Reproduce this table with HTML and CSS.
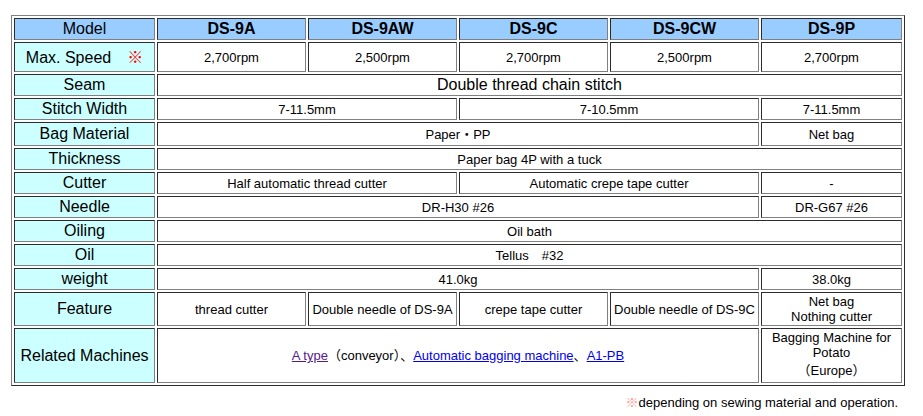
FILE: index.html
```html
<!DOCTYPE html>
<html>
<head>
<meta charset="utf-8">
<link rel="stylesheet" href="styles.css">
</head>
<body>
<div class="wrap">
<table class="spec">
  <tr class="r-head">
    <th class="lbl">Model</th>
    <th class="m">DS-9A</th>
    <th class="m">DS-9AW</th>
    <th class="m">DS-9C</th>
    <th class="m">DS-9CW</th>
    <th class="m last">DS-9P</th>
  </tr>
  <tr class="r-speed">
    <td class="lbl">Max. Speed　<span class="mark">※</span></td>
    <td>2,700rpm</td>
    <td>2,500rpm</td>
    <td>2,700rpm</td>
    <td>2,500rpm</td>
    <td>2,700rpm</td>
  </tr>
  <tr>
    <td class="lbl">Seam</td>
    <td colspan="5" class="big">Double thread chain stitch</td>
  </tr>
  <tr>
    <td class="lbl">Stitch Width</td>
    <td colspan="2">7-11.5mm</td>
    <td colspan="2">7-10.5mm</td>
    <td>7-11.5mm</td>
  </tr>
  <tr class="r-bag">
    <td class="lbl">Bag Material</td>
    <td colspan="4">Paper・PP</td>
    <td>Net bag</td>
  </tr>
  <tr>
    <td class="lbl">Thickness</td>
    <td colspan="5">Paper bag 4P with a tuck</td>
  </tr>
  <tr>
    <td class="lbl">Cutter</td>
    <td colspan="2">Half automatic thread cutter</td>
    <td colspan="2">Automatic crepe tape cutter</td>
    <td>-</td>
  </tr>
  <tr>
    <td class="lbl">Needle</td>
    <td colspan="4">DR-H30 #26</td>
    <td>DR-G67 #26</td>
  </tr>
  <tr>
    <td class="lbl">Oiling</td>
    <td colspan="5">Oil bath</td>
  </tr>
  <tr>
    <td class="lbl">Oil</td>
    <td colspan="5">Tellus　#32</td>
  </tr>
  <tr>
    <td class="lbl">weight</td>
    <td colspan="4">41.0kg</td>
    <td>38.0kg</td>
  </tr>
  <tr>
    <td class="lbl">Feature</td>
    <td>thread cutter</td>
    <td>Double needle of DS-9A</td>
    <td>crepe tape cutter</td>
    <td>Double needle of DS-9C</td>
    <td>Net bag<br>Nothing cutter</td>
  </tr>
  <tr class="r-rel">
    <td class="lbl">Related Machines</td>
    <td colspan="4"><a href="#" class="visited">A type</a>（conveyor）、<a href="#">Automatic bagging machine</a>、<a href="#">A1-PB</a></td>
    <td>Bagging Machine for Potato<br><span class="eu">（Europe）</span></td>
  </tr>
</table>
<p class="note"><span class="note-mark">※</span>depending on sewing material and operation.</p>
</div>
</body>
</html>
```

FILE: styles.css
```css
html, body {
  margin: 0;
  padding: 0;
  background: #fff;
}
body {
  padding: 15px 0 0 11px;
  font-family: "Liberation Sans", Arial, "Noto Sans CJK JP", sans-serif;
  color: #000;
}
.wrap {
  width: 894px;
}
.spec {
  width: 894px;
  table-layout: fixed;
  border-collapse: separate;
  border-spacing: 2px;
  border: 1px outset gray;
}
.spec th,
.spec td {
  box-sizing: border-box;
  border: 1px inset gray;
  padding: 1px;
  text-align: center;
  vertical-align: middle;
  font-size: 13px;
  line-height: 15px;
  background: #fff;
}
.spec th.lbl { width: 141px; }
.spec th.m { width: 149px; }
.spec th.last { width: 141px; }
.spec th {
  background: #99ccff;
  font-size: 16px;
  line-height: 18px;
  font-weight: bold;
  height: 22px;
}
.spec th.lbl {
  font-weight: normal;
}
.spec td.lbl {
  background: #ccffff;
  font-size: 16px;
  line-height: 18px;
  height: 22px;
}
.spec td.big {
  font-size: 16px;
  line-height: 18px;
}
.r-speed td.lbl {
  height: 30px;
}
.r-bag td.lbl {
  height: 24px;
}
.mark {
  color: #ff0000;
  font-family: "Noto Sans CJK JP", sans-serif;
  font-weight: 200;
}
.r-rel td.lbl {
  height: 55px;
}
.eu {
  line-height: 21px;
}
a {
  color: #0000ee;
  text-decoration: underline;
}
a.visited {
  color: #551a8b;
}
.note {
  margin: 8px 0 0;
  padding-right: 7px;
  text-align: right;
  font-size: 13px;
  line-height: 15px;
}
.note-mark {
  color: #ff9999;
  font-family: "Noto Sans CJK JP", sans-serif;
  font-weight: 200;
}
```
